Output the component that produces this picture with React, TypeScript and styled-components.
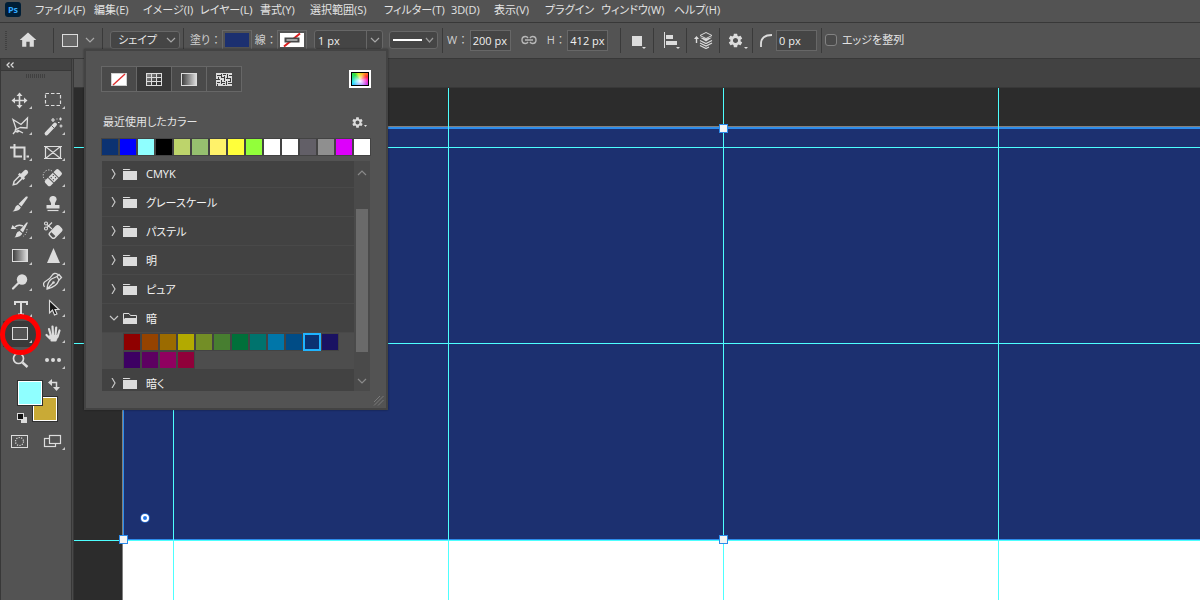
import React, { useState } from 'react';
import styled, { createGlobalStyle } from 'styled-components';
import { MdSettings, MdHome } from 'react-icons/md';

const ink = '#dcdcdc';
const bar = '#535353';
const line = '#383838';
const well = '#434343';
const cyan = '#4dffff';
const edge = '#2d8ceb';

const GlobalStyle = createGlobalStyle`
  *, *::before, *::after { box-sizing: border-box; }
  body {
    margin: 0;
    background: #2c2c2c;
    color: #e4e4e4;
    font-family: 'Open Sans', 'Noto Sans CJK JP', sans-serif;
    font-size: 11px;
    line-height: 16px;
    font-feature-settings: 'palt';
  }
  button, input, select { font: inherit; font-feature-settings: inherit; color: inherit; margin: 0; padding: 0; border: 0; background: none; border-radius: 0; }
  svg { display: block; flex: none; }
`;

const Window = styled.div`
  position: relative;
  display: flex;
  flex-direction: column;
  min-height: 100vh;
  overflow: hidden;
`;

/* ---------- menu bar ---------- */
const MenuBar = styled.nav`
  display: flex;
  height: 23px;
  padding: 2px 0 0 5px;
  background: ${bar};
  border-bottom: 1px solid ${line};
`;
const Logo = styled.div`
  width: 16px;
  height: 15px;
  margin-right: 14px;
  border-radius: 3px;
  background: #001e36;
  color: #31a8ff;
  font-size: 9px;
  font-weight: 700;
  line-height: 15px;
  text-align: center;
`;
const MenuList = styled.div`
  display: grid;
  grid-template-columns: 59px 49px 57px 60px 50px 74px 67px 43px 51px 56px 73px auto;
`;
const MenuItem = styled.button`
  height: 16px;
  text-align: left;
  white-space: nowrap;
`;

/* ---------- options bar ---------- */
const OptionsBar = styled.div`
  display: flex;
  align-items: center;
  height: 36px;
  padding: 0 0 1px 5px;
  background: ${bar};
  border-bottom: 1px solid ${line};
`;
const Cell = styled.div<{ $w: number; $gap?: number; $pad?: number; $line?: boolean }>`
  display: flex;
  align-items: center;
  flex: none;
  width: ${p => p.$w}px;
  height: 25px;
  gap: ${p => p.$gap ?? 0}px;
  padding-left: ${p => p.$pad ?? 0}px;
  border-right: ${p => (p.$line === false ? 0 : 1)}px solid #3a3a3a;
  white-space: nowrap;
`;
const IconButton = styled.button<{ $w?: number }>`
  display: flex;
  align-items: center;
  justify-content: center;
  width: ${p => (p.$w ? `${p.$w}px` : 'auto')};
  color: ${ink};
`;
const Grip = styled.i`
  width: 2px;
  height: 19px;
  background: repeating-linear-gradient(#404040 0 1px, transparent 1px 2px);
`;
const SelectBox = styled.span<{ $w: number }>`
  display: flex;
  align-items: center;
  width: ${p => p.$w}px;
  height: 18px;
  border: 1px solid #676767;
  border-radius: 3px;
  background: #454545;
  padding-right: 3px;
  select { flex: 1; min-width: 0; height: 16px; padding-left: 7px; appearance: none; outline: 0; }
`;
const Label = styled.label`
  display: flex;
  gap: 3px;
  color: #cfcfcf;
`;
const Swatch = styled.button`
  display: flex;
  align-items: center;
  justify-content: center;
  width: 30px;
  height: 20px;
  border: 1px solid #686868;
  background: ${bar};
`;
const SwatchFill = styled.span`
  width: 24px;
  height: 14px;
  background: #1c3070;
`;
const NumberBox = styled.input`
  width: 41px;
  height: 21px;
  border: 1px solid #676767;
  background: #454545;
  padding-left: 2px;
  color: #f0f0f0;
`;
const Combo = styled.span`
  display: flex;
  align-items: center;
  width: 69px;
  height: 20px;
  border: 1px solid #676767;
  border-radius: 3px;
  background: #454545;
  input { width: 52px; height: 18px; padding-left: 3px; border-right: 1px solid #676767; color: #f0f0f0; }
  button { flex: 1; display: flex; justify-content: center; }
`;
const CheckBox = styled.input`
  appearance: none;
  width: 12px;
  height: 12px;
  border: 1px solid #828282;
  border-radius: 3px;
  background: #4a4a4a;
`;

/* ---------- work area ---------- */
const Body = styled.div`
  display: flex;
  flex: 1;
  gap: 1px;
  background: #4a4a4a;
`;
const ToolPanel = styled.aside`
  flex: none;
  width: 72px;
  background: ${bar};
  border: 1px solid ${line};
  border-width: 0 1px;
`;
const ToolHeader = styled.button`
  display: flex;
  align-items: center;
  width: 100%;
  height: 12px;
  padding-left: 5px;
  background: ${well};
  border-bottom: 1px solid ${line};
`;
const ToolGrip = styled.div`
  height: 16px;
  padding: 3px 0 0 25px;
  i { display: block; width: 19px; height: 4px; background: repeating-linear-gradient(90deg, #404040 0 1px, transparent 1px 2px); }
`;
const ToolGrid = styled.div`
  display: grid;
  grid-template-columns: 33px 33px;
  grid-auto-rows: 26px;
  padding-left: 2px;
`;
const ToolButton = styled.button<{ $on?: boolean }>`
  position: relative;
  display: block;
  background: ${p => (p.$on ? '#3a3a3a' : 'none')};
`;
const Marker = styled.span`
  position: absolute;
  z-index: 1;
  left: -3px;
  top: -7px;
  width: 41px;
  height: 41px;
  border: 5px solid #f00;
  border-radius: 50%;
`;
const ColorWell = styled.div`
  position: relative;
  height: 55px;
`;
const Chip = styled.button<{ $c: string; $x: number; $y: number }>`
  position: absolute;
  left: ${p => p.$x}px;
  top: ${p => p.$y}px;
  width: 26px;
  height: 26px;
  border: 1px solid #303030;
  box-shadow: inset 0 0 0 1px #fff;
  background: ${p => p.$c};
`;
const WellIcon = styled.button<{ $x: number; $y: number }>`
  position: absolute;
  left: ${p => p.$x}px;
  top: ${p => p.$y}px;
`;
const Main = styled.main`
  display: flex;
  flex: 1;
  flex-direction: column;
  border-left: 1px solid ${line};
`;
const TabStrip = styled.div`
  display: flex;
  height: 29px;
  background: #424242;
  border-bottom: 1px solid ${line};
`;
const Tab = styled.div`
  width: 26%;
  background: ${bar};
`;
const Canvas = styled.div`
  position: relative;
  flex: 1;
  overflow: hidden;
  background: #2c2c2c;
`;
const Artboard = styled.div`
  position: absolute;
  left: 48px;
  top: 38px;
  right: 0;
  bottom: 0;
  background: #fff;
  border: solid #808080;
  border-width: 1px 0 0 1px;
`;
const Shape = styled.div`
  height: 413px;
  background: #1c3070;
  border: 1px solid ${edge};
  border-width: 2px 0 1px 1px;
`;
const Guide = styled.i<{ $x?: number; $y?: number }>`
  position: absolute;
  background: ${cyan};
  ${p => (p.$x !== undefined
    ? `left: ${p.$x}px; top: 0; bottom: 0; width: 1px;`
    : `top: ${p.$y}px; left: 0; right: 0; height: 1px;`)}
`;
const Handle = styled.i<{ $x: number; $y: number }>`
  position: absolute;
  left: ${p => p.$x}px;
  top: ${p => p.$y}px;
  width: 9px;
  height: 9px;
  border: 1px solid ${edge};
  background: #f4f4f4;
`;
const CornerPin = styled.i`
  position: absolute;
  left: 67px;
  top: 426px;
  width: 8px;
  height: 8px;
  border: 2px solid #fff;
  border-radius: 50%;
  background: #2478e8;
  box-shadow: 0 0 0 1px #2060c0;
`;

/* ---------- fill popup ---------- */
const Popup = styled.section`
  position: absolute;
  left: 84px;
  top: 49px;
  width: 304px;
  padding: 15px 15px 17px;
  border: 2px solid ${well};
  background: ${bar};
  box-shadow: 0 0 2px rgba(0, 0, 0, 0.4);
`;
const PopupTop = styled.div`
  display: flex;
  align-items: center;
  justify-content: space-between;
  height: 26px;
`;
const Segments = styled.div`
  display: flex;
`;
const Segment = styled.button<{ $on?: boolean }>`
  display: flex;
  align-items: center;
  justify-content: center;
  width: 36px;
  height: 26px;
  margin-right: -1px;
  border: 1px solid #676767;
  background: ${p => (p.$on ? '#383838' : '#4a4a4a')};
`;
const RecentHead = styled.div`
  display: flex;
  align-items: center;
  justify-content: space-between;
  height: 16px;
  margin: 22px 4px 8px 2px;
`;
const SwatchRow = styled.div`
  display: flex;
  flex-wrap: wrap;
`;
const ColorCell = styled.button<{ $c: string; $on?: boolean }>`
  width: 18px;
  height: 18px;
  border: ${p => (p.$on ? '2px solid #1fb4ff' : '1px solid #434343')};
  background: ${p => p.$c};
`;
const ListBox = styled.div`
  display: flex;
  height: 230px;
  margin: 5px 1px 0;
  background: #424242;
  overflow: hidden;
`;
const ListScroll = styled.div`
  flex: 1;
`;
const FolderRow = styled.button<{ $first?: boolean }>`
  display: flex;
  align-items: center;
  width: 100%;
  height: ${p => (p.$first ? 27 : 29)}px;
  padding-left: 7px;
  border-bottom: 1px solid #494949;
  color: #f4f4f4;
  span { margin-left: 9px; padding-top: ${p => (p.$first ? 0 : 2)}px; }
`;
const FolderIcons = styled.i`
  display: flex;
  align-items: center;
  gap: 4px;
`;
const GroupColors = styled(SwatchRow)`
  height: 36px;
  padding: 0 15px 0 21px;
  background: #4d4d4d;
`;
const ScrollBar = styled.div`
  display: flex;
  flex-direction: column;
  align-items: center;
  justify-content: space-between;
  width: 16px;
  padding: 7px 0 5px;
  background: #4a4a4a;
`;
const Thumb = styled.i`
  width: 12px;
  height: 143px;
  margin-top: 7px;
  background: #6a6a6a;
`;
const ResizeGrip = styled.svg`
  position: absolute;
  right: 2px;
  bottom: 2px;
`;
const Spectrum = styled.button`
  width: 22px;
  height: 18px;
  border: 2px solid #fff;
  box-shadow: inset 0 0 0 1px #000;
  background:
    radial-gradient(circle at 50% 65%, #fff 0, rgba(255, 255, 255, 0) 60%),
    conic-gradient(from 315deg at 50% 55%, #30e040, #d8f020 30deg, #ffb020 70deg, #ff3030 110deg, #ff20c0 140deg, #a040ff 190deg, #3060ff 230deg, #20e0ff 290deg, #30e040);
`;

/* ---------- small drawings ---------- */
const Chevron = ({ dir = 'down', color = '#a8a8a8' }: { dir?: 'down' | 'up' | 'right'; color?: string }) => {
  const d = dir === 'down' ? 'M1 3 L5 7 L9 3' : dir === 'up' ? 'M1 7 L5 3 L9 7' : 'M3 0 L6 5 L3 10';
  return <svg width="10" height="10" viewBox="0 0 10 10" fill="none" stroke={color} strokeWidth="1.2"><path d={d} /></svg>;
};
const Folder = ({ open }: { open?: boolean }) => (
  <svg width="14" height="11" viewBox="0 0 14 11">
    {open ? (
      <>
        <path d="M.5 10V.5H6L7.5 2.5H13.5V5" fill="none" stroke={ink} />
        <path d="M0 11V7L2 5H14V11Z" fill={ink} />
      </>
    ) : (
      <>
        <path d="M0 0H6.5L7.5 1H0Z" fill={ink} />
        <path d="M0 2H14V11H0Z" fill={ink} />
      </>
    )}
  </svg>
);
const RedSlash = () => (
  <svg width="16" height="13" viewBox="0 0 16 13">
    <rect x=".5" y=".5" width="15" height="12" fill="#fff" stroke="#d0d0d0" />
    <path d="M2 12 14 1" stroke="#e03030" strokeWidth="1.4" />
  </svg>
);
const GridIcon = () => (
  <svg width="16" height="13" viewBox="0 0 16 13">
    <defs><linearGradient id="gg" x1="0" y1="0" x2="1" y2="1"><stop stopColor="#999" /><stop offset=".7" stopColor="#333" /></linearGradient></defs>
    <rect x=".5" y=".5" width="15" height="12" fill="url(#gg)" stroke={ink} />
    <path d="M5.5 0V13M10.5 0V13M0 4.5H16M0 8.5H16" stroke={ink} />
  </svg>
);
const GradientBox = ({ id }: { id: string }) => (
  <svg width="16" height="13" viewBox="0 0 16 13">
    <defs><linearGradient id={id}><stop stopColor="#3a3a3a" /><stop offset="1" stopColor="#e0e0e0" /></linearGradient></defs>
    <rect x=".5" y=".5" width="15" height="12" fill={`url(#${id})`} stroke={ink} />
  </svg>
);
const PatternIcon = () => (
  <svg width="16" height="13" viewBox="0 0 16 13">
    <rect width="16" height="13" fill={ink} />
    <path d="M1 2.5H5M5.500 1V4M7 1.500H10M11.500 1V5M13 2.500H16M2.500 4V6M0 6.500H4M5 4.500H8M8.500 3V8M10 5.500H14M12 8.500H15M14.500 5V8M1 9.500H4M5.500 7V11M6 9.500H9M10.500 8V12M12 10.500H16M1.500 11V13M7 11.500H9" stroke="#3c3c3c" />
  </svg>
);
const NoStroke = () => (
  <svg width="24" height="14" viewBox="0 0 24 14">
    <rect width="24" height="14" fill="#fff" />
    <path d="M4 13.500 20 .5" stroke="#dc1c1c" strokeWidth="2" />
    <rect x="5.500" y="5.500" width="13" height="3" fill="#fff" stroke="#484848" strokeWidth="2" />
  </svg>
);

/* Each tool is drawn in a 33x26 cell whose origin is the middle of the icon. */
type Tool = { name: string; art: React.ReactNode; flat?: boolean };
const tools: Tool[] = [
  { name: '移動', art: <><path d="M-.5-6V7M-7 .5H6" stroke={ink} strokeWidth="1.6" /><path d="M-.5-7.5 2.5-4H-3.5ZM-.5 8.5 2.5 5H-3.5ZM-8.5.5-5-2.5V3.5ZM7.5.5 4-2.5V3.5Z" fill={ink} /></> },
  { name: '長方形選択', art: <rect x="-7.5" y="-6.5" width="15" height="12" fill="none" stroke={ink} strokeWidth="1.2" strokeDasharray="3.5 2" /> },
  { name: '多角形選択', art: <path d="M-4 2.5-7-6.500 1-1.500 7.500-8 7 2 0 1.500M-4 2.500-5 4.500M0 1.500-3 3A2 1.500 0 1 0-1 5L3 7M-1 4.500-5 5.500-7 8" fill="none" stroke={ink} strokeWidth="1.3" /> },
  { name: '自動選択', art: <><path d="M-6.5 7.5 2-1.500" stroke={ink} strokeWidth="3.8" strokeLinecap="round" /><path d="M-1.500-.5 1 2" stroke={bar} strokeWidth=".9" /><path d="M0-8V-4M-2-6H2M7.500-8.500V-5.500M6-7H9M8-1.500V1.500M6.500 0H9.500M3.500-7H4.500M5-3.500H6.500" stroke={ink} strokeWidth="1.2" /></> },
  { name: '切り抜き', art: <path d="M-10-4.500H4.500V8M-5.500-8V4.500H2M6.500 4.500H9" fill="none" stroke={ink} strokeWidth="2" /> },
  { name: 'フレーム', art: <path d="M-7.500-5.500H7.500V6.500H-7.500ZM-7.500-5.500 7.500 6.500M7.500-5.500-7.500 6.500M-9-5.500H9M-9 6.500H9" fill="none" stroke={ink} strokeWidth="1.2" /> },
  { name: 'スポイト', art: <g transform="rotate(45)"><path d="M-1.800-2V6.500L0 9.500 1.800 6.500V-2" fill="none" stroke={ink} strokeWidth="1.5" /><path d="M-3.800-3.500H3.800V-1H-3.800Z" fill={ink} /><path d="M-2.400-3V-8Q-2.400-10.500 0-10.500T2.400-8V-3Z" fill={ink} /></g> },
  { name: 'スポット修復', art: <><g transform="rotate(-45)"><rect x="-9" y="-3.8" width="19" height="7.6" rx="2" fill={ink} /><path d="M-3-4V4M4-4V4" stroke={bar} /><path d="M-1.500-1.500h1M1.500-1.500h1M-1.500 1.500h1M1.500 1.500h1" stroke="#444" strokeWidth="1.3" /></g><path d="M-7.500 2A5 5 0 0 1-1-7" fill="none" stroke={ink} strokeDasharray="1.2 1.4" /></> },
  { name: 'ブラシ', art: <><path d="M7.500-7.500Q8-7 7.500-6L1.500 2.500-1.500 0 6-7.500Z" fill={ink} /><path d="M-2 .8 .8 3.300Q0 7-7.500 7.500-5.500 6.500-5 4-4.500 1.500-2 .8Z" fill={ink} /></> },
  { name: 'コピースタンプ', art: <><path d="M0-8A3.300 3.300 0 0 1 2.800-2.500Q1.500-1 2 1H6.500V4.500H-6.500V1H-2Q-1.500-1-2.800-2.500A3.300 3.300 0 0 1 0-8Z" fill={ink} /><path d="M-5.500 6.500H5.500" stroke={ink} strokeWidth="1.2" /></> },
  { name: 'ヒストリーブラシ', art: <><path d="M8-7.500 3 2.500 0 0 6.500-7.500Z" fill={ink} /><path d="M-.5 1 2.300 3.500Q1 7-5.500 7.500-4 6-3.800 4-3 1.500-.5 1Z" fill={ink} /><path d="M-5-3Q-2-6 3-4" fill="none" stroke={ink} strokeWidth="1.5" /><path d="M-9-1-7.500-5-3.500-1Z" fill={ink} /><path d="M7-1Q7 4 3 6.500" fill="none" stroke={ink} strokeDasharray="1.2 1.5" /></> },
  { name: '消しゴム', art: <><g transform="translate(2.5 2) rotate(-45)"><rect x="-6.5" y="-3.5" width="13" height="7" rx="2" fill="none" stroke={ink} strokeWidth="1.4" /><path d="M-3-3.500H5Q6.500-3.500 6.500-2V2Q6.500 3.500 5 3.500H-3Z" fill={ink} /></g><g fill="none" stroke={ink} strokeWidth="1.1"><circle cx="-7" cy="-6.5" r="1.5" /><circle cx="-7" cy="-1.5" r="1.5" /><path d="M-6-5.500-1-1M-6-2.500-1-7.500" /></g></> },
  { name: 'グラデーション', art: <g transform="translate(-8 -7)"><GradientBox id="tg" /></g> },
  { name: 'シャープ', art: <path d="M.5-8 7 7H-6Z" fill={ink} /> },
  { name: '覆い焼き', art: <><circle cx="2" cy="-2.5" r="5.2" fill={ink} /><path d="M-1.500 1-7 6.500" stroke={ink} strokeWidth="2.2" strokeLinecap="round" /></> },
  { name: '曲線ペン', art: <><path d="M-6 7Q-5.500 0-1.500-3L4-5.500 6-2Q3.500 5-6 7ZM-6 7 0 1" fill="none" stroke={ink} strokeWidth="1.3" /><circle cx=".5" cy=".5" r="1.3" fill={ink} /><path d="M4-5.500 6-7.500 8.500-4.500 6-2M-8.500 5Q-11 1-7-1T-1-6.500 5-7.500" fill="none" stroke={ink} strokeWidth="1.3" /></> },
  { name: '文字', art: <path d="M-5-3V-6H7V-3M1-6V7M-2 6.500H4" fill="none" stroke={ink} strokeWidth="2" /> },
  { name: 'パス選択', art: <path d="M-3.500-7.500V5L-.5 2 1.500 7 4 6 2 1.500H6Z" fill="#161616" stroke={ink} strokeWidth="1.1" /> },
  { name: '長方形', art: <rect x="-7.5" y="-6.5" width="15" height="12" fill="#535353" stroke={ink} /> },
  { name: '手のひら', art: <g fill="none" stroke={ink} strokeWidth="2.2" strokeLinecap="round"><path d="M-4-5-2 2M-.5-7.500 0 1M3.200-6.500 2.500 1M6.500-3.500 4.500 3M-6.500 1-3 4.500" /><path d="M-3 1H5Q5 5 3 7H-1Q-3 5-5 2.500Z" fill={ink} stroke="none" /><path d="M-1.500 6.500H2.500" /></g> },
  { name: 'ズーム', flat: true, art: <><circle cx="-1.5" cy="-1.5" r="5" fill="none" stroke={ink} strokeWidth="1.7" /><path d="M2.500 2.500 7.500 7" stroke={ink} strokeWidth="2.4" /></> },
  { name: 'ツールバーを編集', art: <path d="M-6 0h.01M0 0h.01M6 0h.01" stroke={ink} strokeWidth="4" strokeLinecap="round" /> },
];
const viewTools: Tool[] = [
  { name: 'クイックマスク', flat: true, art: <><rect x="-8.5" y="-5.5" width="16" height="12" fill="none" stroke={ink} /><circle cx="-.5" cy=".5" r="4" fill="none" stroke={ink} strokeWidth="1.2" strokeDasharray="1.2 1.3" /></> },
  { name: 'スクリーンモード', art: <><rect x="-8.5" y="-2.5" width="11" height="8" fill="none" stroke={ink} strokeWidth="1.2" /><rect x="-3.5" y="-5.5" width="11" height="8" fill={bar} stroke={ink} strokeWidth="1.2" /></> },
];
const ToolCell = ({ art, flat, name, on }: Tool & { on?: boolean }) => (
  <ToolButton aria-label={name} $on={on}>
    <svg width="33" height="26" viewBox="-17 -13 33 26">
      {art}
      {!flat && <path d="M12 6V9H9Z" fill="#c8c8c8" />}
    </svg>
    {on && <Marker />}
  </ToolButton>
);

const menus = ['ファイル(F)', '編集(E)', 'イメージ(I)', 'レイヤー(L)', '書式(Y)', '選択範囲(S)', 'フィルター(T)', '3D(D)', '表示(V)', 'プラグイン', 'ウィンドウ(W)', 'ヘルプ(H)'];
const recent = ['#0b3272', '#0000fe', '#8fffff', '#000000', '#bdd46b', '#96c06f', '#fff26a', '#ffff3a', '#92ff3a', '#ffffff', '#ffffff', '#625f67', '#8f8f8f', '#dd00fb', '#ffffff'];
const dark = ['#8f0000', '#954300', '#9b6b00', '#b3aa00', '#738e26', '#477e30', '#00703a', '#00736d', '#0076a9', '#004c86', '#0b3272', '#1a1262', '#3d0063', '#5d0061', '#900060', '#90003a'];
const closedFolders = ['CMYK', 'グレースケール', 'パステル', '明', 'ピュア'];

const FolderItem = ({ name, open, first }: { name: string; open?: boolean; first?: boolean }) => (
  <FolderRow $first={first} aria-expanded={!!open}>
    <FolderIcons><Chevron dir={open ? 'down' : 'right'} color="#c8c8c8" /><Folder open={open} /></FolderIcons>
    <span>{name}</span>
  </FolderRow>
);

export default function App() {
  const [picked, setPicked] = useState(10);
  return (
    <Window>
      <GlobalStyle />
      <MenuBar>
        <Logo>Ps</Logo>
        <MenuList>{menus.map(m => <MenuItem key={m}>{m}</MenuItem>)}</MenuList>
      </MenuBar>

      <OptionsBar>
        <Cell $w={49} $gap={11}>
          <Grip />
          <IconButton aria-label="ホーム"><MdHome size={20} /></IconButton>
        </Cell>
        <Cell $w={49} $pad={8} $gap={7}>
          <svg width="16" height="13" viewBox="0 0 16 13"><rect x=".5" y=".5" width="15" height="12" fill="#666" stroke={ink} /></svg>
          <IconButton aria-label="ツールプリセット"><Chevron /></IconButton>
        </Cell>
        <Cell $w={81} $pad={7}>
          <SelectBox $w={70}>
            <select aria-label="ツールモード"><option>シェイプ</option></select>
            <Chevron />
          </SelectBox>
        </Cell>
        <Cell $w={130} $pad={6} $gap={3} $line={false}>
          <Label htmlFor="fill"><span>塗り</span><span>：</span></Label>
          <Swatch id="fill"><SwatchFill /></Swatch>
          <Label htmlFor="stroke"><span>線</span><span>：</span></Label>
          <Swatch id="stroke"><NoStroke /></Swatch>
        </Cell>
        <Cell $w={129} $gap={6}>
          <Combo>
            <input aria-label="線の幅" defaultValue="1 px" />
            <button aria-label="線の幅を選択"><Chevron /></button>
          </Combo>
          <SelectBox $w={49} as="button" aria-label="線の種類">
            <svg width="44" height="10" viewBox="0 0 44 10"><path d="M3 5H32" stroke="#fff" strokeWidth="2" /><path d="M36 3 39.500 7 43 3" fill="none" stroke="#999" strokeWidth="1.2" /></svg>
          </SelectBox>
        </Cell>
        <Cell $w={178} $pad={4} $gap={4}>
          <Label htmlFor="w"><span>W</span><span>：</span></Label>
          <NumberBox id="w" defaultValue="200 px" />
          <IconButton aria-label="縦横比を固定" $w={28}>
            <svg width="16" height="10" viewBox="0 0 16 10" fill="none" stroke="#b8b8b8" strokeWidth="1.4"><path d="M7 3Q6 1.500 4.500 1.500 1 1.500 1 5T4.500 8.500Q6 8.500 7 7M9 3Q10 1.500 11.500 1.500 15 1.500 15 5T11.500 8.500Q10 8.500 9 7M4 5H12" /></svg>
          </IconButton>
          <Label htmlFor="h"><span>H</span><span>：</span></Label>
          <NumberBox id="h" defaultValue="412 px" />
        </Cell>
        <Cell $w={33} $pad={10}>
          <IconButton aria-label="パスの操作">
            <svg width="16" height="18" viewBox="0 0 16 18"><path d="M1 5H11V15H1Z" fill={ink} /><path d="M11 16H15L13 18Z" fill={ink} /></svg>
          </IconButton>
        </Cell>
        <Cell $w={33} $pad={10}>
          <IconButton aria-label="パスの整列">
            <svg width="17" height="18" viewBox="0 0 17 18"><path d="M.5 1V17" stroke={ink} /><path d="M2 4H9V8H2ZM2 10H13V14H2Z" fill={ink} /><path d="M12 16H16L14 18Z" fill={ink} /></svg>
          </IconButton>
        </Cell>
        <Cell $w={33} $pad={7}>
          <IconButton aria-label="パスの配置">
            <svg width="20" height="18" viewBox="0 0 20 18"><path d="M2.500 12V6" stroke={ink} strokeWidth="1.4" /><path d="M0 8 2.500 5 5 8Z" fill={ink} /><path d="M6 4.500 12 1.500 18 4.500 12 7.500Z" fill="none" stroke={ink} /><path d="M6 6.500 12 7.500 18 6.500 12 10.500Z" fill={ink} /><path d="M6 9.500 12 12.500 18 9.500M6 12 12 15 18 12M6 14.500 12 17.500 15 16" fill="none" stroke={ink} strokeWidth="1.2" /></svg>
          </IconButton>
        </Cell>
        <Cell $w={33} $pad={7}>
          <IconButton aria-label="パスオプション"><MdSettings size={17} />
            <svg width="4" height="18" viewBox="0 0 4 18"><path d="M0 16H4L2 18Z" fill={ink} /></svg>
          </IconButton>
        </Cell>
        <Cell $w={69} $pad={7} $gap={4}>
          <svg width="12" height="13" viewBox="0 0 12 13"><path d="M1 13V10Q1 1 12 1" fill="none" stroke={ink} strokeWidth="1.8" /></svg>
          <NumberBox aria-label="角丸の半径" defaultValue="0 px" />
        </Cell>
        <Cell $w={90} $pad={3} $gap={5} $line={false}>
          <CheckBox type="checkbox" id="edge" />
          <label htmlFor="edge">エッジを整列</label>
        </Cell>
      </OptionsBar>

      <Body>
        <ToolPanel>
          <ToolHeader aria-label="パネルを折りたたむ">
            <svg width="8" height="6" viewBox="0 0 8 6" fill="none" stroke={ink} strokeWidth="1.2"><path d="M3.500.5 1 3 3.500 5.500M7.500.5 5 3 7.500 5.500" /></svg>
          </ToolHeader>
          <ToolGrip><i /></ToolGrip>
          <ToolGrid>{tools.map(t => <ToolCell key={t.name} {...t} on={t.name === '長方形'} />)}</ToolGrid>
          <ColorWell>
            <Chip aria-label="背景色" $c="#c9aa36" $x={31} $y={23} />
            <Chip aria-label="描画色" $c="#8fffff" $x={16} $y={7} />
            <WellIcon aria-label="色を入れ替え" $x={47} $y={6}>
              <svg width="12" height="12" viewBox="0 0 12 12"><path d="M3 3.500H8.500V9" fill="none" stroke={ink} strokeWidth="1.5" /><path d="M0 3.500 4 0V7ZM8.500 12 5 8H12Z" fill={ink} /></svg>
            </WellIcon>
            <WellIcon aria-label="初期設定の色" $x={16} $y={40}>
              <svg width="10" height="10" viewBox="0 0 10 10"><path d="M4 4H10V10H4Z" fill={ink} /><rect x=".5" y=".5" width="6" height="6" fill="#111" stroke={ink} /></svg>
            </WellIcon>
          </ColorWell>
          <ToolGrid>{viewTools.map(t => <ToolCell key={t.name} {...t} />)}</ToolGrid>
        </ToolPanel>

        <Main>
          <TabStrip><Tab /></TabStrip>
          <Canvas>
            <Artboard><Shape /></Artboard>
            {[99, 374, 649, 924].map(x => <Guide key={x} $x={x} />)}
            {[59, 255, 452].map(y => <Guide key={y} $y={y} />)}
            <Handle $x={645} $y={36} />
            <Handle $x={45} $y={447} />
            <Handle $x={645} $y={447} />
            <CornerPin />
          </Canvas>
        </Main>
      </Body>

      <Popup>
        <PopupTop>
          <Segments>
            <Segment aria-label="なし"><RedSlash /></Segment>
            <Segment aria-label="べた塗り" $on><GridIcon /></Segment>
            <Segment aria-label="グラデーション"><GradientBox id="sg" /></Segment>
            <Segment aria-label="パターン"><PatternIcon /></Segment>
          </Segments>
          <Spectrum aria-label="カラーピッカー" />
        </PopupTop>
        <RecentHead>
          最近使用したカラー
          <IconButton aria-label="設定"><MdSettings size={13} />
            <svg width="3" height="12" viewBox="0 0 3 12"><path d="M0 9H3L1.500 11Z" fill={ink} /></svg>
          </IconButton>
        </RecentHead>
        <SwatchRow>{recent.map((c, i) => <ColorCell key={i} $c={c} aria-label={c} />)}</SwatchRow>
        <ListBox>
          <ListScroll>
            {closedFolders.map((f, i) => <FolderItem key={f} name={f} first={i === 0} />)}
            <FolderItem name="暗" open />
            <GroupColors>
              {dark.map((c, i) => <ColorCell key={c} $c={c} $on={i === picked} aria-label={c} onClick={() => setPicked(i)} />)}
            </GroupColors>
            <FolderItem name="暗く" />
          </ListScroll>
          <ScrollBar>
            <Chevron dir="up" color="#8a8a8a" />
            <Thumb />
            <Chevron color="#8a8a8a" />
          </ScrollBar>
        </ListBox>
        <ResizeGrip width="11" height="11" viewBox="0 0 11 11" stroke="#7a7a7a" fill="none"><path d="M1 7 7 1M1 10.500 10.500 1M5 10.500 10.500 5" /></ResizeGrip>
      </Popup>
    </Window>
  );
}
